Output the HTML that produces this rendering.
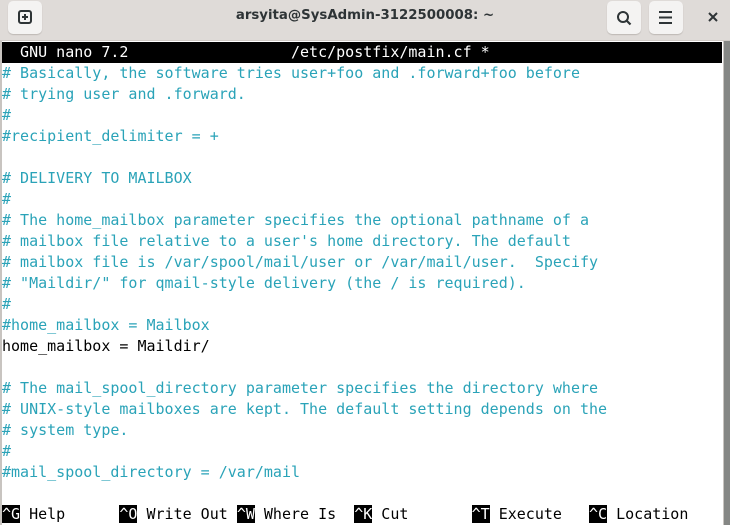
<!DOCTYPE html>
<html><head><meta charset="utf-8"><style>
*{margin:0;padding:0;box-sizing:border-box}
body{width:730px;height:525px;overflow:hidden;background:#fff;position:relative;font-family:"DejaVu Sans Mono","Liberation Mono",monospace}
.tb{position:absolute;left:0;top:0;width:730px;height:41px;background:#dfdbd8;border-bottom:1px solid #cfcac6}
.btn{position:absolute;top:1px;width:34px;height:33px;background:#f4f3f2;border-radius:5px;box-shadow:0 1px 1px #bdb8b4}
.title{position:absolute;left:0;width:730px;top:8px;text-align:center;font-family:"DejaVu Sans","Liberation Sans",sans-serif;font-weight:bold;font-size:13.3px;color:#2e3436}
.term{position:absolute;left:2px;top:42px;width:720px;font-size:15px;line-height:21px;white-space:pre;color:#2aa3b8}
.row{height:21px}
.row span.t{position:relative;top:1px}
.hdr{background:#000;color:#fff}
.k{background:#000;color:#fff}
.p{color:#000}
.lb{position:absolute;left:0;top:41px;width:2px;height:484px;background:#c8c4c0}
.sb{position:absolute;left:723px;top:41px;width:7px;height:484px;background:#858785;border-left:1px solid #c8c4c0}
</style></head><body>
<div class="tb">
 <div class="btn" style="left:8px"><svg width="34" height="33"><rect x="11" y="10" width="12" height="12" rx="2" fill="none" stroke="#2e3436" stroke-width="2"/><path d="M17 13v6M14 16h6" stroke="#2e3436" stroke-width="2"/></svg></div>
 <div class="title">arsyita@SysAdmin-3122500008: ~</div>
 <div class="btn" style="left:607px"><svg width="34" height="33"><circle cx="16" cy="16" r="5" fill="none" stroke="#2e3436" stroke-width="2"/><path d="M19.5 19.5l4 4" stroke="#2e3436" stroke-width="2.2"/></svg></div>
 <div class="btn" style="left:649px"><svg width="34" height="33"><path d="M10 11h13M10 16.5h13M10 22h13" stroke="#2e3436" stroke-width="2"/></svg></div>
 <svg style="position:absolute;left:707px;top:11px" width="12" height="12"><path d="M2 2l8 8M10 2l-8 8" stroke="#2e3436" stroke-width="2"/></svg>
</div>
<div class="lb"></div>
<div class="term" style="top:43px"><div class="row hdr" style="margin-top:-1px">  GNU nano 7.2                  /etc/postfix/main.cf *</div><div class="row"># Basically, the software tries user+foo and .forward+foo before</div><div class="row"># trying user and .forward.</div><div class="row">#</div><div class="row">#recipient_delimiter = +</div><div class="row"> </div><div class="row"># DELIVERY TO MAILBOX</div><div class="row">#</div><div class="row"># The home_mailbox parameter specifies the optional pathname of a</div><div class="row"># mailbox file relative to a user's home directory. The default</div><div class="row"># mailbox file is /var/spool/mail/user or /var/mail/user.  Specify</div><div class="row"># "Maildir/" for qmail-style delivery (the / is required).</div><div class="row">#</div><div class="row">#home_mailbox = Mailbox</div><div class="row p">home_mailbox = Maildir/</div><div class="row"> </div><div class="row"># The mail_spool_directory parameter specifies the directory where</div><div class="row"># UNIX-style mailboxes are kept. The default setting depends on the</div><div class="row"># system type.</div><div class="row">#</div><div class="row">#mail_spool_directory = /var/mail</div><div class="row"> </div><div class="row p"><span class="k">^G</span> Help      <span class="k">^O</span> Write Out <span class="k">^W</span> Where Is  <span class="k">^K</span> Cut       <span class="k">^T</span> Execute   <span class="k">^C</span> Location</div></div>
<div class="sb"></div>
</body></html>
